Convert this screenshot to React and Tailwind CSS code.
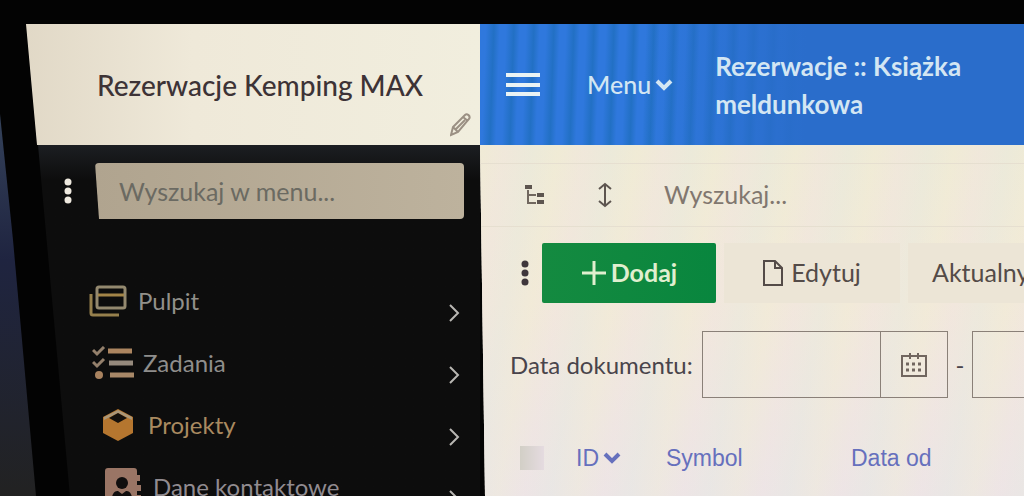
import React from "react";

const CheckList = () => (
  <svg width="42" height="34" viewBox="0 0 42 34" fill="none">
    <path d="M1 4l4 4 7-7M1 16l4 4 7-7" stroke="#94806c" strokeWidth="3" />
    <circle cx="7" cy="29" r="4" fill="#a8825f" />
    <path d="M16 5h24" stroke="#ac8560" strokeWidth="5" />
    <path d="M17 17h24" stroke="#968a7d" strokeWidth="5" />
    <path d="M18 29h24" stroke="#a88868" strokeWidth="5" />
  </svg>
);

const Windows = () => (
  <svg width="38" height="32" viewBox="0 0 38 32" fill="none" strokeWidth="3">
    <rect x="8" y="2" width="28" height="21" rx="2" stroke="#94896f" />
    <path d="M9 10h26" stroke="#a38548" />
    <path d="M2 9v19a2 2 0 0 0 2 2h26" stroke="#96804d" />
  </svg>
);

const Box = () => (
  <svg width="32" height="32" viewBox="0 0 32 32">
    <path d="M16 0l15 8v16l-15 8-15-8V8z" fill="#b5762f" />
    <path d="M16 1l14 7v3L16 4 2 11V8z" fill="#ab9778" />
    <path d="M16 4l9 5-9 5-9-5z" fill="#14100c" />
  </svg>
);

const Contacts = () => (
  <svg width="36" height="38" viewBox="0 0 36 38">
    <path
      d="M3 0h26a3 3 0 0 1 3 3v4h3v6h-3v4h4v6h-4v4h4v6h-4v5H0V3a3 3 0 0 1 3-3z"
      fill="#9a7565"
    />
    <circle cx="17" cy="15" r="6" fill="#100e0e" />
    <path d="M7 31c0-6 3-8 6-8l4 3 4-3c3 0 6 2 6 8z" fill="#100e0e" />
  </svg>
);

const Dots = () => (
  <svg width="10" height="28" viewBox="0 0 10 28" fill="currentColor">
    <circle cx="5" cy="5" r="3.5" />
    <circle cx="5" cy="14" r="3.5" />
    <circle cx="5" cy="23" r="3.5" />
  </svg>
);

const ChevronDown = () => (
  <svg width="18" height="14" viewBox="0 0 18 14" fill="none">
    <path d="M2 3l7 7 7-7" stroke="currentColor" strokeWidth="4" />
  </svg>
);

const Calendar = () => (
  <svg width="26" height="26" viewBox="0 0 26 26" fill="none" stroke="#71665f">
    <path d="M1 4h24v20H1zM9 1v6M17 1v6" strokeWidth="2" />
    <path d="M5 12h3M11 12h3M17 12h3M5 18h3M11 18h3M17 18h3" strokeWidth="3" />
  </svg>
);

const menuItems = [
  { label: "Pulpit", icon: Windows, pad: "pl-[86px]", color: "text-[#92908a]" },
  { label: "Zadania", icon: CheckList, pad: "pl-[91px]", color: "text-[#8f8e8c]" },
  { label: "Projekty", icon: Box, pad: "pl-[96px]", color: "text-[#a98a60]" },
  {
    label: "Dane kontaktowe",
    icon: Contacts,
    pad: "pl-[101px]",
    color: "text-[#918b90]",
  },
];

const Sidebar = () => (
  <aside className="relative flex w-[480px] shrink-0 flex-col">
    <div className="absolute inset-0 bg-linear-to-b from-[#43566b] via-[#1f2440] to-[#222222] [clip-path:polygon(0_90px,13px_216px,36px_100%,0_100%)]" />

    <header className="relative flex h-[121px] shrink-0 items-center justify-center bg-linear-to-r from-[#dfd6c4] via-[#efe9d9] via-40% to-[#f1eede] pl-10 [clip-path:polygon(26px_0,100%_0,100%_100%,37px_100%)]">
      <h1 className="text-[28px] font-medium text-[#3d3336]">
        Rezerwacje Kemping MAX
      </h1>
      <button aria-label="Edytuj nazwę" className="absolute right-2 bottom-2">
        <svg
          width="22"
          height="24"
          viewBox="0 0 22 24"
          fill="none"
          stroke="#9b9084"
          strokeWidth="2"
        >
          <path d="M1 22l2-8L15 2c2-2 6 1 4 4L8 19zM3 14l5 5M13 4l5 4M6 16l9-9" />
        </svg>
      </button>
    </header>

    <div className="relative flex min-h-0 grow flex-col bg-linear-to-b from-[#1c1e22] to-[#0d0d0d] to-10% [clip-path:polygon(38px_0,100%_0,100%_100%,70px_100%)]">
      <div className="flex items-center gap-[22px] pt-[18px] pr-4 pl-[63px] text-[#eee9df]">
        <button aria-label="Opcje menu">
          <Dots />
        </button>
        <input
          aria-label="Wyszukaj w menu"
          placeholder="Wyszukaj w menu..."
          className="h-14 min-w-0 grow rounded-sm bg-linear-to-r from-[#b0a48f] to-[#bdb29d] px-6 text-[25px] text-[#4a4944] placeholder:text-[#6b6a62] [clip-path:polygon(0_0,100%_0,100%_100%,4px_100%)]"
        />
      </div>

      <nav className="mt-[51px]">
        <ul>
          {menuItems.map(({ label, icon: Icon, pad, color }) => (
            <li key={label}>
              <a href="#" className={`flex h-[62px] items-center pr-5 ${pad}`}>
                <span className="flex w-11 shrink-0 justify-center">
                  <Icon />
                </span>
                <span className={`ml-2 grow text-2xl ${color}`}>{label}</span>
                <svg
                  className="mt-6"
                  width="12"
                  height="20"
                  viewBox="0 0 12 20"
                  fill="none"
                >
                  <path d="M2 2l8 8-8 8" stroke="#b9b7b3" strokeWidth="2" />
                </svg>
              </a>
            </li>
          ))}
        </ul>
      </nav>
    </div>
  </aside>
);

const TopBar = () => (
  <header className="flex h-[121px] shrink-0 items-center bg-[#2a6dcb] bg-[linear-gradient(90deg,transparent_30%,#2a6dcb_60%),repeating-linear-gradient(92deg,#2f78dd_0px,#2f78dd_6px,#2270c4_14px,#2f78dd_20px)] pl-[26px] text-[#d3e6f3]">
    <button aria-label="Pokaż menu">
      <svg width="34" height="26" viewBox="0 0 34 26" fill="none">
        <path d="M0 3h34M0 13h34M0 22h34" stroke="#eaf3f4" strokeWidth="4" />
      </svg>
    </button>
    <button className="ml-[47px] flex items-center gap-1 text-[25px] font-medium">
      Menu <ChevronDown />
    </button>
    <h2 className="ml-[42px] w-[272px] text-[26px] leading-[38px] font-bold">
      Rezerwacje :: Książka meldunkowa
    </h2>
  </header>
);

const DateField = ({ label }) => (
  <div className="flex h-[67px] shrink-0 border border-[#8a8078]">
    <input aria-label={label} className="w-[177px] px-3 text-2xl" />
    <button
      aria-label="Kalendarz"
      className="flex w-[67px] items-center justify-center border-l border-[#8a8078]"
    >
      <Calendar />
    </button>
  </div>
);

const Content = () => (
  <main className="flex min-w-0 grow flex-col overflow-hidden bg-[#efe9df] [clip-path:polygon(0_0,100%_0,100%_100%,5px_100%,0_120px)]">
    <TopBar />

    <div className="grow bg-[repeating-linear-gradient(100deg,#f4efc833_0px,#f3dfe033_26px,#dfe9dc33_52px,#f4efc833_78px),linear-gradient(180deg,#efead9_0%,#f1e9dc_45%,#ece6e7_100%)]">
      <div className="mt-[18px] flex h-16 items-center border-y border-[#e6dfd0] pl-[45px] text-[#5d554f]">
        <button aria-label="Drzewo">
          <svg width="20" height="20" viewBox="0 0 20 20" fill="none">
            <path d="M0 0h7v4H0zM12 8h7v4h-7zM12 15h7v4h-7z" fill="#5d554f" />
            <path d="M3 5v13h8M3 10h8" stroke="#71685f" strokeWidth="2" />
          </svg>
        </button>
        <button aria-label="Wysokość wierszy" className="ml-[53px]">
          <svg
            width="14"
            height="26"
            viewBox="0 0 14 26"
            fill="none"
            stroke="currentColor"
            strokeWidth="2"
          >
            <path d="M7 2v22M1 7l6-5 6 5M1 19l6 5 6-5" />
          </svg>
        </button>
        <input
          aria-label="Wyszukaj"
          placeholder="Wyszukaj..."
          className="ml-[52px] min-w-0 grow text-[25px] placeholder:text-[#81776f]"
        />
      </div>

      <div className="mt-4 flex h-[60px] items-stretch gap-2 pl-10 whitespace-nowrap text-[#544b48]">
        <button aria-label="Więcej" className="mr-1 text-[#3f373c]">
          <Dots />
        </button>
        <button className="flex w-[174px] shrink-0 items-center justify-center gap-1 rounded-xs bg-linear-to-r from-[#148a40] to-[#08863e] text-[25px] font-bold text-[#e0efcf]">
          <svg width="26" height="26" viewBox="0 0 26 26" fill="none">
            <path d="M13 1v24M1 13h24" stroke="currentColor" strokeWidth="3" />
          </svg>
          Dodaj
        </button>
        <button className="flex w-[176px] shrink-0 items-center justify-center gap-2 bg-[#ece5d6] text-[25px]">
          <svg
            width="20"
            height="26"
            viewBox="0 0 20 26"
            fill="none"
            stroke="currentColor"
            strokeWidth="2"
          >
            <path d="M1 1h11l7 7v17H1zM12 1v7h7" />
          </svg>
          Edytuj
        </button>
        <button className="shrink-0 bg-[#ece5d6] px-6 text-[25px]">
          Aktualny
        </button>
      </div>

      <div className="mt-7 flex items-center pl-[30px] text-2xl whitespace-nowrap text-[#49444b]">
        <span className="w-[192px] shrink-0">Data dokumentu:</span>
        <DateField label="Data dokumentu od" />
        <span className="w-6 shrink-0 text-center">-</span>
        <DateField label="Data dokumentu do" />
      </div>

      <table className="mt-[42px] w-full table-fixed text-left font-['Liberation_Sans',sans-serif] text-[23px] text-[#6670bd]">
        <thead>
          <tr className="h-9">
            <th className="w-24 pl-10">
              <input
                type="checkbox"
                aria-label="Zaznacz wszystkie"
                className="block h-6 w-6 appearance-none bg-linear-to-r from-[#d2cfc6] to-[#e5dbe0]"
              />
            </th>
            <th className="w-[90px] font-normal">
              <button className="flex items-center gap-1">
                ID <ChevronDown />
              </button>
            </th>
            <th className="w-[185px] font-normal">Symbol</th>
            <th className="font-normal">Data od</th>
          </tr>
        </thead>
      </table>
    </div>
  </main>
);

const App = () => {
  return (
    <div className="flex h-screen overflow-hidden bg-[#030303] pt-6 font-[Lato,'Open_Sans',sans-serif]">
      <Sidebar />
      <Content />
    </div>
  );
};

export default App;
